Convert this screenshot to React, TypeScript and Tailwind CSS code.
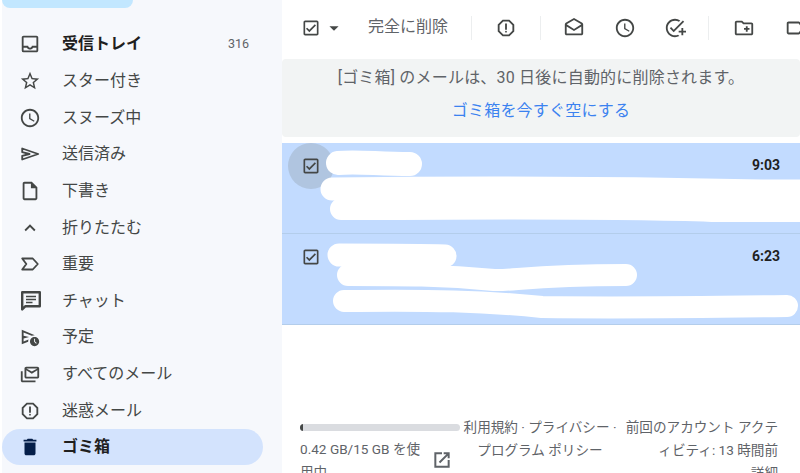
import type { IconType } from "react-icons";
import {
  MdArrowDropDown,
  MdDelete,
  MdExpandLess,
  MdOutlineAccessTime,
  MdOutlineAddTask,
  MdOutlineCheckBox,
  MdOutlineCreateNewFolder,
  MdOutlineDrafts,
  MdOutlineInbox,
  MdOutlineInsertDriveFile,
  MdOutlineLabel,
  MdOutlineReport,
  MdOutlineScheduleSend,
  MdOutlineStarBorder,
} from "react-icons/md";

type IconProps = { className?: string };

const AllMailIcon = ({ className }: IconProps) => (
  <svg viewBox="0 0 24 24" className={className} fill="currentColor">
    <path d="M20 4H8c-1.100 0-2 .9-2 2v9c0 1.100.9 2 2 2h12c1.100 0 2-.9 2-2V6c0-1.100-.9-2-2-2zm0 11H8V8l6 3.600L20 8v7zm-6-5.700L8 6h12l-6 3.300z" />
    <path d="M4 9H2v10c0 1.100.9 2 2 2h14v-2H4V9z" />
  </svg>
);

const SentIcon = ({ className }: IconProps) => (
  <svg viewBox="0 0 24 24" className={className} fill="none" stroke="currentColor" strokeWidth="2" strokeLinejoin="round">
    <path d="M3.500 6 21 12 3.500 18v-4l8-2-8-2z" />
  </svg>
);

const ImportantIcon = ({ className }: IconProps) => (
  <svg viewBox="0 0 24 24" className={className} fill="none" stroke="currentColor" strokeWidth="2" strokeLinejoin="round">
    <path d="M3.500 6H15l5.500 6-5.500 6H3.500L8 12z" />
  </svg>
);

const ChatIcon = ({ className }: IconProps) => (
  <svg viewBox="0 0 24 24" className={className} fill="none" stroke="currentColor">
    <path d="M3.200 3.200h17.600v14H6.500l-3.300 3.300z" strokeWidth="2.400" strokeLinejoin="round" />
    <path d="M7 7.500h10M7 10.500h10M7 13.500h6.500" strokeWidth="1.700" />
  </svg>
);

const OpenIcon = ({ className }: IconProps) => (
  <svg viewBox="0 0 24 24" className={className} fill="none" stroke="currentColor" strokeWidth="2.400">
    <path d="M12 4H4v16h16v-8M14 4h6v6M20 4 9 15" />
  </svg>
);

type NavItem = { label: string; Icon: IconType | typeof AllMailIcon; iconClass?: string; count?: string; bold?: boolean; active?: boolean };

const navItems: NavItem[] = [
  { label: "受信トレイ", Icon: MdOutlineInbox, count: "316", bold: true },
  { label: "スター付き", Icon: MdOutlineStarBorder },
  { label: "スヌーズ中", Icon: MdOutlineAccessTime },
  { label: "送信済み", Icon: SentIcon },
  { label: "下書き", Icon: MdOutlineInsertDriveFile },
  { label: "折りたたむ", Icon: MdExpandLess },
  { label: "重要", Icon: ImportantIcon },
  { label: "チャット", Icon: ChatIcon, iconClass: "mr-[-2px] h-6 w-6" },
  { label: "予定", Icon: MdOutlineScheduleSend },
  { label: "すべてのメール", Icon: AllMailIcon },
  { label: "迷惑メール", Icon: MdOutlineReport },
  { label: "ゴミ箱", Icon: MdDelete, bold: true, active: true },
];

const Divider = () => <div className="h-6 w-px shrink-0 bg-[#eceeef]" />;

const Sidebar = () => (
  <aside className="w-[282px] shrink-0 border-l-2 border-white bg-[#f6f8fc]">
    <div className="h-2 w-[131px] rounded-b-[22px] bg-[#c2e7ff]" />
    <nav className="mt-[17.500px] flex flex-col">
      {navItems.map(({ label, Icon, iconClass, count, bold, active }) => (
        <div
          key={label}
          className={`flex h-[36.650px] w-[261px] items-center rounded-full pl-[17px] pr-[14px] ${active ? "bg-[#d3e3fd] text-[#041e49]" : "text-[#444746]"}`}
        >
          <Icon className={`mt-px shrink-0 ${iconClass ?? "h-[22px] w-[22px]"}`} />
          <span className={`ml-[21px] flex-1 pt-px text-base ${bold ? "font-bold text-[#1f1f1f]" : ""}`}>{label}</span>
          {count && <span className="pt-px text-[12.500px] text-[#5f6368]">{count}</span>}
        </div>
      ))}
    </nav>
  </aside>
);

const Toolbar = () => (
  <div className="flex h-[59px] items-center overflow-hidden pb-[4px] pl-[19px] text-[#444746]">
    <MdOutlineCheckBox className="h-5 w-5 shrink-0" />
    <MdArrowDropDown className="ml-[2px] h-[22px] w-[22px] shrink-0" />
    <span className="-mt-[2px] ml-[23px] shrink-0 text-base text-[#5f6368]">完全に削除</span>
    <div className="ml-[23px]"><Divider /></div>
    <MdOutlineReport className="ml-[23px] h-[22px] w-[22px] shrink-0" />
    <div className="ml-[23px]"><Divider /></div>
    <MdOutlineDrafts className="ml-[22px] h-[22px] w-[22px] shrink-0" />
    <MdOutlineAccessTime className="ml-[29px] h-[22px] w-[22px] shrink-0" />
    <MdOutlineAddTask className="ml-[28px] h-[22px] w-[22px] shrink-0" />
    <div className="ml-[22px]"><Divider /></div>
    <MdOutlineCreateNewFolder className="ml-[24px] h-[22px] w-[22px] shrink-0" />
    <MdOutlineLabel className="ml-[29px] h-[22px] w-[22px] shrink-0" />
  </div>
);

const TrashNotice = () => (
  <div className="flex h-[78px] flex-col items-center rounded-[4px] bg-[#f2f4f4] pt-[7px] text-base tracking-[0.2px]">
    <span className="leading-6 text-[#5f6368]">[ゴミ箱] のメールは、30 日後に自動的に削除されます。</span>
    <span className="mt-[9px] leading-6 text-[#3b82f0]">ゴミ箱を今すぐ空にする</span>
  </div>
);

const MailRow = ({ time, hover }: { time: string; hover?: boolean }) => (
  <div className="flex h-[91px] items-start justify-between border-b border-[#b3cdeb] bg-[#c2dbff] last:border-b-0">
    <div className={`ml-[6px] flex h-[46px] w-[46px] items-center justify-center rounded-full ${hover ? "bg-[#b0c5e0]" : ""}`}>
      <MdOutlineCheckBox className="h-5 w-5 text-[#444746]" />
    </div>
    <span className="mr-[20px] mt-[14px] text-sm font-bold leading-4 text-[#1f1f1f]">{time}</span>
  </div>
);

const Scribbles = () => (
  <svg className="absolute left-0 top-0 h-[182px] w-[518px]" viewBox="0 0 518 182" fill="none" stroke="#fff" strokeLinecap="round">
    <path d="M56 20 C75 18 95 21 128 21" strokeWidth="24" />
    <path d="M50 46 C200 44 350 45 480 48 L530 48" strokeWidth="23" />
    <path d="M59 66 C200 66 320 64 430 68 L530 68" strokeWidth="22" />
    <path d="M57 112 C100 112 140 112 163 113" strokeWidth="23" />
    <path d="M66 132 C120 132 160 132 212 137 C230 138 250 132 344 132" strokeWidth="22" />
    <path d="M62 158 C150 157 200 158 260 164 C340 165 430 164 505 163" strokeWidth="22" />
  </svg>
);

const Footer = () => (
  <footer className="grid grid-cols-[160px_160px_158px] pl-[18px] pt-[90.500px] text-[13.600px] leading-[23px] text-[#5f6368]">
    <div>
      <div className="mb-[7px] mt-[8px] h-[7px] overflow-hidden rounded-full bg-[#dadce0]">
        <div className="h-full w-[3px] bg-[#444746]" />
      </div>
      <div className="flex items-start">
        <span className="w-[125px]">0.42 GB/15 GB を使用中</span>
        <OpenIcon className="ml-[7px] mt-[12px] h-5 w-5 text-[#5f6368]" />
      </div>
    </div>
    <div className="text-center">
      利用規約 · プライバシー ·
      <br />
      プログラム ポリシー
    </div>
    <div className="text-right">
      前回のアカウント アクティビティ: 13 時間前
      <br />
      詳細
    </div>
  </footer>
);

const App = () => (
  <div
    className="flex h-[473px] w-[800px] overflow-hidden bg-white"
    style={{ fontFamily: 'Roboto, "Noto Sans CJK JP", sans-serif' }}
  >
    <Sidebar />
    <main className="min-w-0 flex-1">
      <Toolbar />
      <TrashNotice />
      <div className="relative mt-[6px]">
        <MailRow time="9:03" hover />
        <MailRow time="6:23" />
        <Scribbles />
      </div>
      <Footer />
    </main>
  </div>
);

export default App;
